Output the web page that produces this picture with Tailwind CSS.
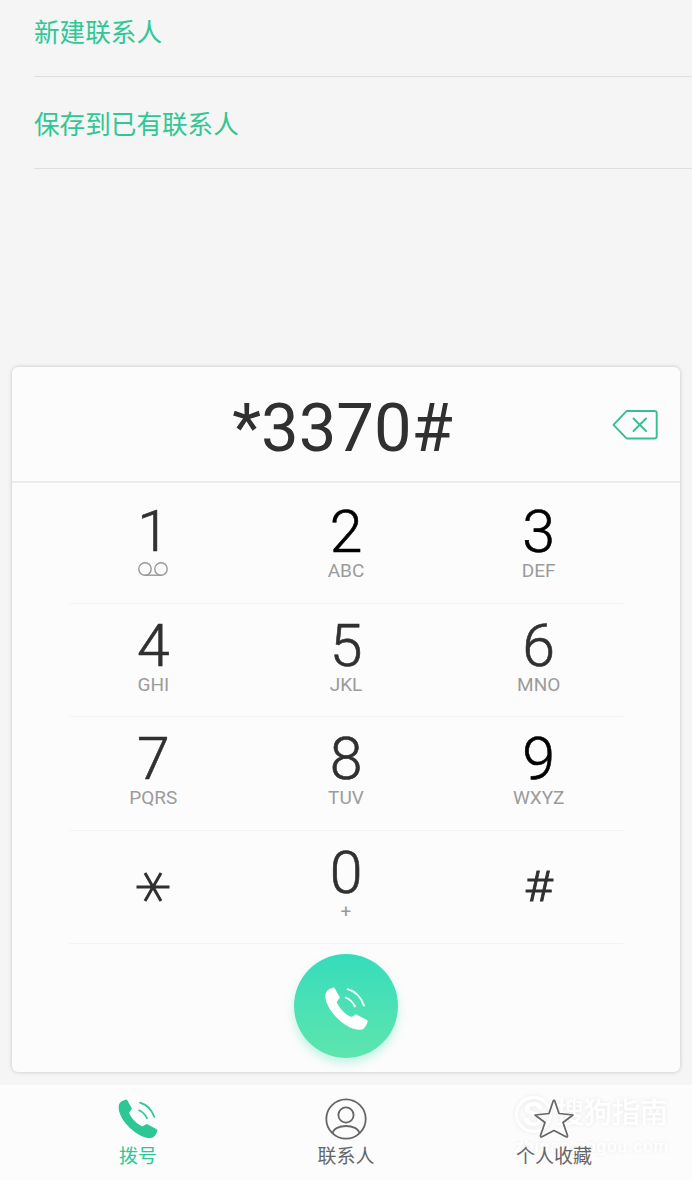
<!DOCTYPE html>
<html lang="zh-CN">
<head>
    <meta charset="UTF-8">
    <meta name="viewport" content="width=device-width, initial-scale=1.0">
    <title>拨号</title>
    <script src="https://cdn.jsdelivr.net/npm/@tailwindcss/browser@4"></script>
</head>
<body class="bg-[#f5f5f5] font-['Roboto','Noto_Sans_CJK_SC',sans-serif] text-[#303030]">

    <div class="w-[692px] h-[1180px] flex flex-col overflow-hidden">
        <!-- Contact actions -->
        <div class="h-[367px] shrink-0 pl-[34px] text-[25.6px] text-[#2fc795]">
            <div class="h-[77px] pt-[14px] leading-[38px] border-b border-[#dfdfdf]">新建联系人</div>
            <div class="h-[92px] pt-[29px] leading-[38px] border-b border-[#dfdfdf]">保存到已有联系人</div>
        </div>

        <!-- Dial pad -->
        <div class="h-[705px] shrink-0 mx-3 rounded-md bg-[#fcfcfc] shadow-[0_0_4px_rgba(0,0,0,0.2)]">
            <div class="h-[116px] flex items-center border-b-2 border-[#ececec] relative">
                <div class="w-full text-center text-[67px] leading-[80px] pt-[7px] pr-[7px]">*3370#</div>
                <svg class="absolute left-[600px] top-[42px]" width="48" height="32" viewBox="0 0 48 32" fill="none" stroke="#35bf92" stroke-width="1.9" stroke-linejoin="round" stroke-linecap="round">
                    <path d="M15.500 2H42.500Q44.700 2 44.700 4.200V27.300Q44.700 29.500 42.500 29.500H15.500Q14.600 29.500 14 28.900L1.500 15.800L14 2.600Q14.600 2 15.500 2Z"/>
                    <path d="M21.500 9.500L34 22M34 9.500L21.500 22"/>
                </svg>
            </div>

            <div class="h-[461px] pt-[7px] px-[57px]">
                <div class="h-[113.5px] border-b border-[#f3f3f3]">
                    <div class="grid grid-cols-3 text-center -mx-3">
                        <div class="pt-[11px]">
                            <div class="text-[58px] leading-[60px] font-light [-webkit-text-stroke:0.6px]">1</div>
                            <svg class="mx-auto" width="32" height="16" viewBox="0 0 32 16" fill="none" stroke="#999" stroke-width="1.400">
                                <circle cx="8" cy="8" r="6.200"/>
                                <circle cx="24" cy="8" r="6.200"/>
                                <path d="M8 14.200H24"/>
                            </svg>
                        </div>
                        <div class="pt-3">
                            <div class="text-[59px] leading-[60px] font-light text-black [-webkit-text-stroke:0.6px]">2</div>
                            <div class="text-[19px] leading-[18px] text-[#9b9b9b]">ABC</div>
                        </div>
                        <div class="pt-3">
                            <div class="text-[59px] leading-[60px] font-light text-black [-webkit-text-stroke:0.6px]">3</div>
                            <div class="text-[19px] leading-[18px] text-[#9b9b9b]">DEF</div>
                        </div>
                    </div>
                </div>
                <div class="h-[113.5px] border-b border-[#f3f3f3]">
                    <div class="grid grid-cols-3 text-center -mx-3 pt-3">
                        <div>
                            <div class="text-[59px] leading-[60px] font-light [-webkit-text-stroke:0.6px]">4</div>
                            <div class="text-[19px] leading-[18px] text-[#9b9b9b]">GHI</div>
                        </div>
                        <div>
                            <div class="text-[59px] leading-[60px] font-light [-webkit-text-stroke:0.6px]">5</div>
                            <div class="text-[19px] leading-[18px] text-[#9b9b9b]">JKL</div>
                        </div>
                        <div>
                            <div class="text-[59px] leading-[60px] font-light [-webkit-text-stroke:0.6px]">6</div>
                            <div class="text-[19px] leading-[18px] text-[#9b9b9b]">MNO</div>
                        </div>
                    </div>
                </div>
                <div class="h-[113.5px] border-b border-[#f3f3f3]">
                    <div class="grid grid-cols-3 text-center -mx-3 pt-3">
                        <div>
                            <div class="text-[59px] leading-[60px] font-light [-webkit-text-stroke:0.6px]">7</div>
                            <div class="text-[19px] leading-[18px] text-[#9b9b9b]">PQRS</div>
                        </div>
                        <div>
                            <div class="text-[59px] leading-[60px] font-light [-webkit-text-stroke:0.6px]">8</div>
                            <div class="text-[19px] leading-[18px] text-[#9b9b9b]">TUV</div>
                        </div>
                        <div>
                            <div class="text-[59px] leading-[60px] font-light text-black [-webkit-text-stroke:0.6px]">9</div>
                            <div class="text-[19px] leading-[18px] text-[#9b9b9b]">WXYZ</div>
                        </div>
                    </div>
                </div>
                <div class="h-[113.5px] border-b border-[#f3f3f3]">
                    <div class="grid grid-cols-3 text-center -mx-3">
                        <div class="pt-[38px]">
                            <svg class="mx-auto" width="36" height="36" viewBox="0 0 36 36" fill="none" stroke="#303030" stroke-width="3">
                                <path d="M1.500 18H34.500M10 4L26 32M26 4L10 32"/>
                            </svg>
                        </div>
                        <div class="pt-3">
                            <div class="text-[59px] leading-[60px] font-light [-webkit-text-stroke:0.6px]">0</div>
                            <div class="text-[19px] leading-[18px] text-[#9b9b9b]">+</div>
                        </div>
                        <div class="pt-[32px]">
                            <div class="text-[42px] leading-[48px] font-light scale-x-118 [-webkit-text-stroke:0.8px]">#</div>
                        </div>
                    </div>
                </div>
            </div>

            <div class="flex justify-center pt-[10px]">
                <div class="w-[104px] h-[104px] rounded-full bg-linear-to-b from-[#34dcbb] to-[#5de5ae] shadow-[0_5px_10px_rgba(80,228,184,0.35)] flex items-center justify-center">
                    <svg class="mt-1" width="43" height="43" viewBox="86 56 118 118" fill="none" stroke="#fff" stroke-linecap="round">
                        <path fill="#fff" stroke="none" d="M96 63L107 58Q111 56 113 60L127 85L118 97C124 113 143 133 159 138L171 131L200 146Q205 149 202 155Q198 166 191 171Q183 175 170 172C132 163 88 116 87 83Q86 70 96 63Z"/>
                        <path stroke-width="5" d="M143 85Q159 91 168 109M148 62Q180 71 193 107"/>
                    </svg>
                </div>
            </div>
        </div>

        <!-- Bottom tabs -->
        <div class="h-[95px] shrink-0 mt-[13px] bg-[#fcfcfc] relative grid grid-cols-3 px-[34px] text-[19px] leading-[28px] text-[#666]">
            <!-- Watermark -->
            <div class="absolute left-[515px] top-[9px] w-[160px] text-white font-medium drop-shadow-[0_0_2px_rgba(0,0,0,0.08)]">
                <div class="flex items-center">
                    <div class="w-[37px] h-[37px] rounded-full border-3 border-white flex items-center justify-center text-[34px] leading-none font-bold">S</div>
                    <div class="ml-[4px] text-[28px] leading-[40px] whitespace-nowrap">搜狗指南</div>
                </div>
                <div class="text-[17px] leading-[26px] tracking-[1px] font-['Liberation_Sans',sans-serif]">zhinan.sogou.com</div>
            </div>

            <div class="flex flex-col items-center pt-[14px] text-[#2bc795]">
                <svg width="40" height="40" viewBox="85 56 120 120" fill="none" stroke="currentColor" stroke-linecap="round">
                    <path fill="currentColor" stroke="none" d="M96 63L107 58Q111 56 113 60L127 85L118 97C124 113 143 133 159 138L171 131L200 146Q205 149 202 155Q198 166 191 171Q183 175 170 172C132 163 88 116 87 83Q86 70 96 63Z"/>
                    <path stroke-width="5" d="M148 90Q163 96 172 114M151 67Q182 76 194 110"/>
                </svg>
                <div class="mt-1">拨号</div>
            </div>
            <div class="flex flex-col items-center pt-[13px]">
                <svg width="42" height="42" viewBox="0 0 42 42" fill="none" stroke="#666" stroke-width="1.800">
                    <circle cx="21" cy="21" r="19.700"/>
                    <circle cx="21" cy="17" r="7.600"/>
                    <path d="M7.500 35.500C9 25.500 33 25.500 34.500 35.500"/>
                </svg>
                <div class="mt-[3px]">联系人</div>
            </div>
            <div class="relative flex flex-col items-center pt-[13px]">
                <svg width="42" height="42" viewBox="0 0 42 42" fill="none" stroke="#666" stroke-width="1.700" stroke-linejoin="round">
                    <path d="M20.200 3Q21 1 21.800 3L26 15.500L40 17L30 24.500L34.500 37.500Q34.800 39.500 33 38.800L21 32.500L9 38.800Q7.200 39.500 7.500 37.500L12 24.500L2 17L16 15.500Z"/>
                </svg>
                <div class="mt-[3px]">个人收藏</div>
            </div>
        </div>
    </div>

</body>
</html>
